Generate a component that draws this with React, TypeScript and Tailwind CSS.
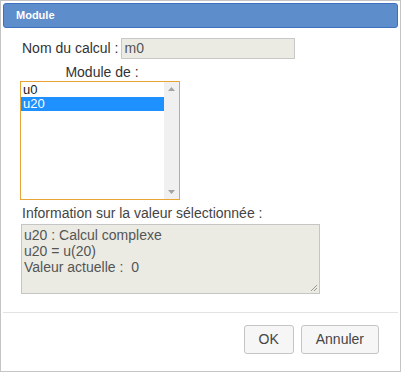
import React from 'react';

export default function App() {
  const items = ['u0', 'u20'];
  return (
    <div className="w-[402px] h-[373px] bg-white font-['Liberation_Sans',Arial,sans-serif]">
      <div className="w-[401px] h-[372px] border border-[#c5c5c5] flex flex-col p-[2px]">
        <div className="h-[25px] rounded-[3px] bg-[#5e8dcb] border border-[#3f6fbf] flex items-center pl-[12px]">
          <span className="text-white text-[11px] font-bold">Module</span>
        </div>

        <div className="flex-1 pl-[17px] pt-[10px] text-[#333]">
          <div className="flex items-center gap-[3px] pl-[2px]">
            <span className="text-[14px] text-[#333]">Nom du calcul :</span>
            <div className="w-[174px] h-[21px] bg-[#ebebe4] border border-[#c8c8c8] text-[14px] leading-[19px] pl-[2px] text-[#555]">
              m0
            </div>
          </div>

          <div className="w-[160px] text-center text-[14px] leading-[16px] mt-[5px] ml-[2px]">Module de :</div>

          <div className="mt-[1px] w-[160px] h-[119px] border border-[#e8a435] flex bg-white">
            <div className="flex-1 pt-[1px]">
              {items.map((it, i) => (
                <div
                  key={it}
                  className={
                    'h-[14px] text-[13px] leading-[14px] pl-[2px] ' +
                    (i === 1 ? 'bg-[#1e90ff] text-white' : 'text-[#222]')
                  }
                >
                  {it}
                </div>
              ))}
            </div>
            <div className="w-[15px] bg-[#f0f0f0] flex flex-col justify-between items-center py-[5px]">
              <svg width="7" height="4" viewBox="0 0 7 4"><path d="M0 4L3.5 0L7 4Z" fill="#a3a3a3" /></svg>
              <svg width="7" height="4" viewBox="0 0 7 4"><path d="M0 0L3.5 4L7 0Z" fill="#a3a3a3" /></svg>
            </div>
          </div>

          <div className="mt-[5px] ml-[2px] text-[14px] leading-[16px] text-[#444]">Information sur la valeur sélectionnée :</div>

          <div className="relative mt-[3px] ml-[1px] w-[299px] h-[70px] bg-[#ebebe4] border border-[#c5c5c5] text-[14px] leading-[16px] text-[#555] pl-[2px] pt-[2px]">
            <div>u20 : Calcul complexe</div>
            <div>u20 = u(20)</div>
            <div>Valeur actuelle :&nbsp; 0</div>
            <svg className="absolute right-[1px] bottom-[1px]" width="8" height="8" viewBox="0 0 8 8">
              <path d="M7 1L1 7M7 4L4 7" stroke="#999" strokeWidth="1" />
            </svg>
          </div>
        </div>

        <div className="h-[57px] border-t border-[#e2e2e2] flex justify-end items-start pt-[12px] pr-[19px] gap-[7px]">
          <button className="h-[29px] px-[14px] border border-[#c5c5c5] rounded-[3px] bg-[#f6f6f6] text-[14px] text-[#454545]">OK</button>
          <button className="h-[29px] px-[14px] border border-[#c5c5c5] rounded-[3px] bg-[#f6f6f6] text-[14px] text-[#454545]">Annuler</button>
        </div>
      </div>
    </div>
  );
}
